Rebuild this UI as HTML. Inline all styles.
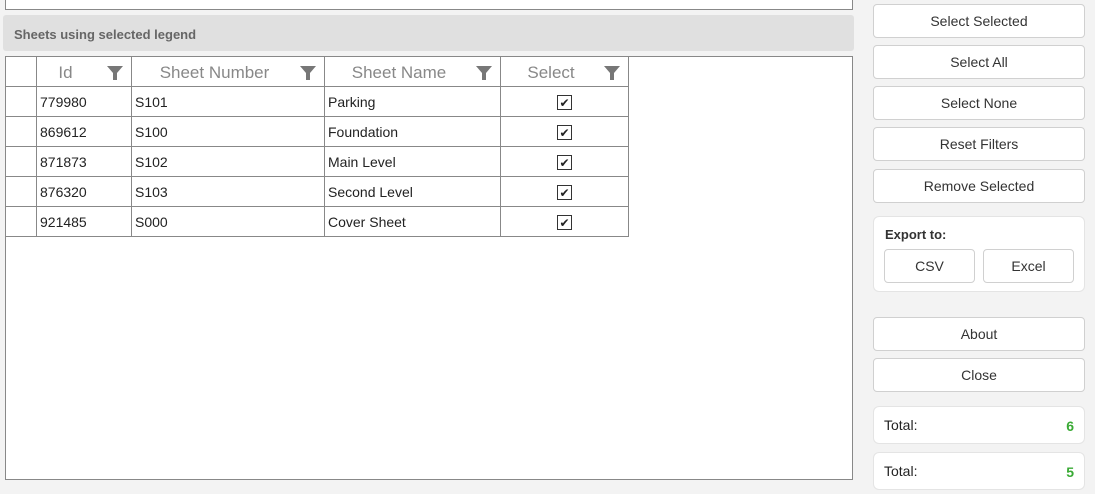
<!DOCTYPE html><html><head><style>
*{box-sizing:border-box;margin:0;padding:0}
body{width:1095px;height:494px;background:#f3f3f3;font-family:"Liberation Sans",sans-serif;position:relative;overflow:hidden;color:#222}
.a{position:absolute}
.btn{position:absolute;left:873px;width:212px;height:34px;background:#fff;border:1px solid #d0d0d0;border-radius:4px;font-size:14px;text-align:center;line-height:33px;color:#333}
.card{position:absolute;background:#fff;border:1px solid #e4e4e4;border-radius:6px}
table{border-collapse:collapse;position:absolute;left:5px;top:56px;font-size:14px}
td,th{border:1px solid #888;height:30px;padding:0 3px;text-align:left;font-weight:normal}
th{color:#888;font-size:17px;text-align:center;position:relative;padding-top:3px}
.f{position:absolute;right:8px;top:8px;width:16px;height:16px}
.cb{display:inline-block;width:15px;height:15px;border:1px solid #333;font-size:12px;line-height:14px;text-align:center}
</style></head><body>
<div class="a" style="left:5px;top:-2px;width:848px;height:12px;background:#fff;border:1px solid #888"></div>
<div class="a" style="left:3px;top:15px;width:851px;height:36px;background:#e0e0e0;border-radius:3px;font-size:13px;font-weight:bold;color:#666;padding:12px 0 0 11px">Sheets using selected legend</div>
<div class="a" style="left:5px;top:56px;width:848px;height:424px;background:#fff;border:1px solid #888"></div>
<table>
<tr><th style="width:31px"></th><th style="width:95px;padding-right:40px">Id<svg class="f" viewBox="0 0 16 16"><path d="M0 1h16l-6 7v7h-4v-7z" fill="#777"/></svg></th><th style="width:193px;padding-right:30px">Sheet Number<svg class="f" viewBox="0 0 16 16"><path d="M0 1h16l-6 7v7h-4v-7z" fill="#777"/></svg></th><th style="width:176px;padding-right:30px">Sheet Name<svg class="f" viewBox="0 0 16 16"><path d="M0 1h16l-6 7v7h-4v-7z" fill="#777"/></svg></th><th style="width:128px;padding-right:30px">Select<svg class="f" viewBox="0 0 16 16"><path d="M0 1h16l-6 7v7h-4v-7z" fill="#777"/></svg></th></tr>
<tr><td></td><td>779980</td><td>S101</td><td>Parking</td><td style="text-align:center"><span class="cb">✔</span></td></tr>
<tr><td></td><td>869612</td><td>S100</td><td>Foundation</td><td style="text-align:center"><span class="cb">✔</span></td></tr>
<tr><td></td><td>871873</td><td>S102</td><td>Main Level</td><td style="text-align:center"><span class="cb">✔</span></td></tr>
<tr><td></td><td>876320</td><td>S103</td><td>Second Level</td><td style="text-align:center"><span class="cb">✔</span></td></tr>
<tr><td></td><td>921485</td><td>S000</td><td>Cover Sheet</td><td style="text-align:center"><span class="cb">✔</span></td></tr>
</table>
<div class="btn" style="top:4px">Select Selected</div>
<div class="btn" style="top:45px">Select All</div>
<div class="btn" style="top:86px">Select None</div>
<div class="btn" style="top:127px">Reset Filters</div>
<div class="btn" style="top:169px">Remove Selected</div>
<div class="card" style="left:873px;top:216px;width:212px;height:76px"><div class="a" style="left:11px;top:10px;font-size:13px;font-weight:bold;color:#333">Export to:</div></div>
<div class="btn" style="left:884px;top:249px;width:91px">CSV</div>
<div class="btn" style="left:983px;top:249px;width:91px">Excel</div>
<div class="btn" style="top:317px">About</div>
<div class="btn" style="top:358px">Close</div>
<div class="card" style="left:873px;top:406px;width:212px;height:38px;font-size:14px;padding:10px"><span>Total:</span><b style="position:absolute;right:10px;top:11px;color:#3aaa35">6</b></div>
<div class="card" style="left:873px;top:452px;width:212px;height:38px;font-size:14px;padding:10px"><span>Total:</span><b style="position:absolute;right:10px;top:11px;color:#3aaa35">5</b></div>
</body></html>
